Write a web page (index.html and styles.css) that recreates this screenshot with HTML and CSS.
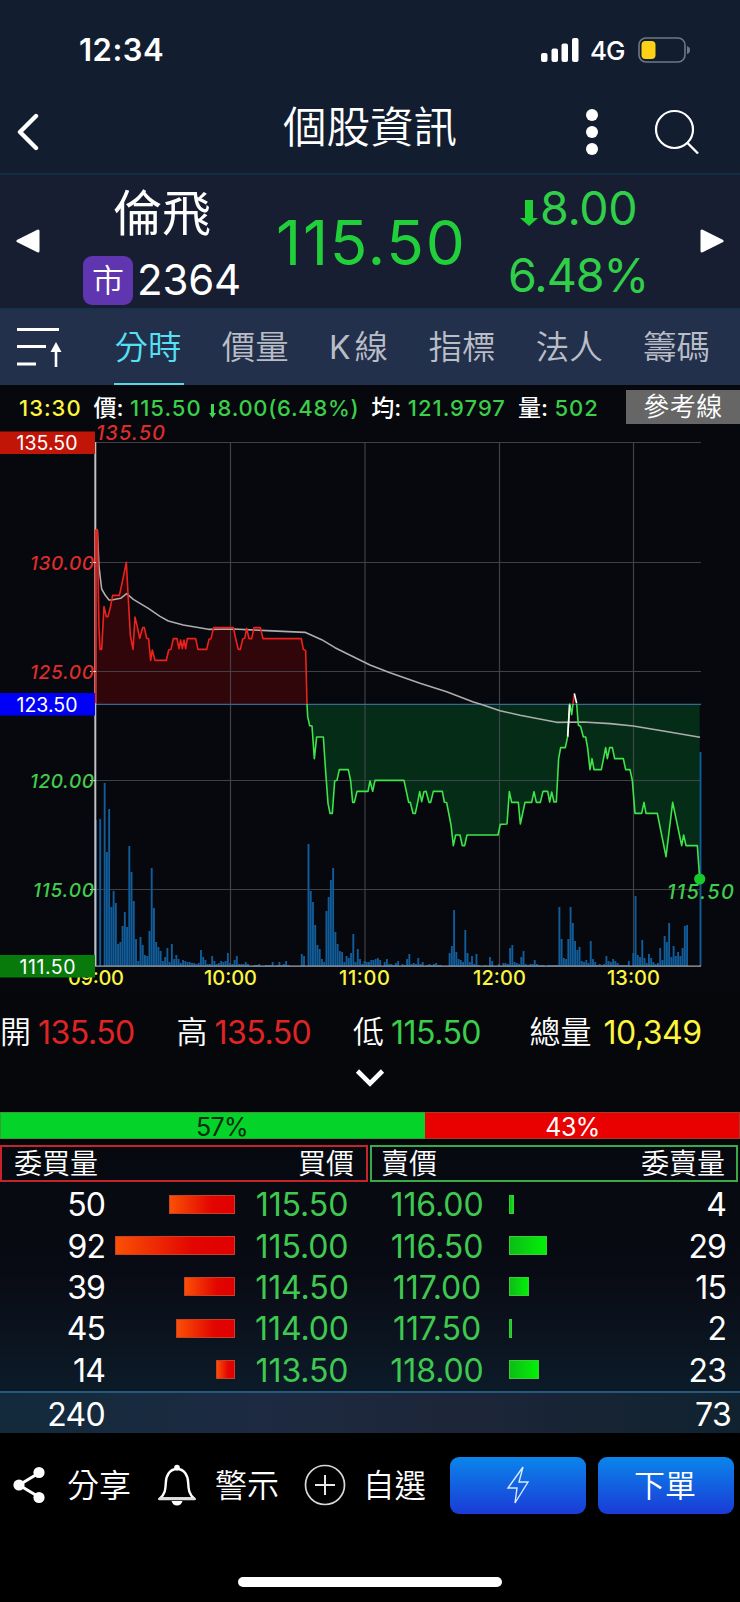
FILE: index.html
```html
<!DOCTYPE html>
<html lang="zh-Hant">
<head>
<meta charset="utf-8">
<title>個股資訊</title>
<link rel="stylesheet" href="styles.css">
</head>
<body>
<div class="app">
  <header class="top">
    <div class="status">
      <span class="clock">12:34</span>
      <svg class="signal" width="38" height="24" viewBox="0 0 38 24"><g fill="#fff"><rect x="0" y="15" width="6.5" height="9" rx="2"/><rect x="10.5" y="10.5" width="6.5" height="13.5" rx="2"/><rect x="20.5" y="5.5" width="6.5" height="18.5" rx="2"/><rect x="31" y="0" width="6.5" height="24" rx="2"/></g></svg>
      <span class="net">4G</span>
      <svg class="battery" width="53" height="26" viewBox="0 0 53 26"><rect x="1" y="1" width="46" height="24" rx="7" fill="none" stroke="#6f7887" stroke-width="1.6"/><rect x="3.5" y="4" width="14" height="18" rx="4" fill="#fcd116"/><path d="M49 9q3 1 3 4t-3 4z" fill="#6f7887"/></svg>
    </div>
    <div class="titlebar">
      <svg class="back" width="24" height="38" viewBox="0 0 24 38"><path d="M20 3L4 19L20 35" fill="none" stroke="#fff" stroke-width="4.4" stroke-linecap="round" stroke-linejoin="round"/></svg>
      <h1 class="title">個股資訊</h1>
      <svg class="dots" width="12" height="46" viewBox="0 0 12 46"><g fill="#fff"><circle cx="6" cy="6" r="6"/><circle cx="6" cy="23" r="6"/><circle cx="6" cy="40" r="6"/></g></svg>
      <svg class="search" width="46" height="46" viewBox="0 0 46 46"><circle cx="20.500" cy="20.500" r="18.500" fill="none" stroke="#fff" stroke-width="2.200"/><path d="M33.500 34L44 44.500" stroke="#fff" stroke-width="2.400"/></svg>
    </div>
  </header>

  <section class="quote">
    <svg class="prev" width="24" height="24" viewBox="0 0 24 24"><path d="M22 2V22L2 12Z" fill="#fff" stroke="#fff" stroke-width="3" stroke-linejoin="round"/></svg>
    <div class="ident">
      <div class="name">倫飛</div>
      <div class="codeline"><span class="badge">市</span><span class="code">2364</span></div>
    </div>
    <div class="price">115.50</div>
    <div class="change">
      <div class="delta"><svg width="18" height="26" viewBox="0 0 18 26"><path d="M5 0H13V18H18L9 26L0 18H5Z" fill="#1fd032"/></svg><span>8.00</span></div>
      <div class="pct">6.48%</div>
    </div>
    <svg class="next" width="24" height="24" viewBox="0 0 24 24"><path d="M2 2V22L22 12Z" fill="#fff" stroke="#fff" stroke-width="3" stroke-linejoin="round"/></svg>
  </section>

  <nav class="tabs">
    <svg class="sort" width="46" height="42" viewBox="0 0 46 42"><path d="M0 2.500H42M0 19.500H29M0 37H19" stroke="#fff" stroke-width="3"/><path d="M39 40V22" stroke="#fff" stroke-width="2.600"/><path d="M39 15L44.500 25H33.500Z" fill="#fff"/></svg>
    <span class="tab active">分時</span><span class="tab">價量</span><span class="tab kline"><i>K</i>線</span><span class="tab">指標</span><span class="tab">法人</span><span class="tab">籌碼</span>
  </nav>

  <section class="chart">
    <div class="info">
      <span class="yellow">13:30</span><b>價:</b><span class="green">115.50</span>
      <span class="green small-delta"><svg width="7" height="14" viewBox="0 0 7 14"><path d="M2 0H5V9H7L3.500 14L0 9H2Z" fill="#3fd555"/></svg>8.00(6.48%)</span>
      <b>均:</b><span class="green">121.9797</span><b>量:</b><span class="green">502</span>
      <button class="ref">參考線</button>
    </div>
    <svg class="plot" width="740" height="567" viewBox="0 425 740 567">
      <g transform="translate(0 380) scale(.333333)">
        <path class="fill-up" d="M287 972V450L292 450L297 745L300 808H305L312 680L319 710H324L331 682L338 646H358L366 610L379 547L384 640L391 765L399 808L405 711L413 745L419 775L428 743H433L440 775L446 777L452 841L457 810L465 841H499L506 810L513 808L520 776H531L537 806L542 780L547 806L552 780L557 806L562 776H587L594 808H620L627 778L633 776L641 743H700L708 780L715 808H721L728 777L734 775L740 745L747 776H755L762 743H781L789 776H904L910 808L917 812L921 972Z"/>
      </g>
      <g transform="translate(370 690) scale(.333333)">
        <path class="fill-down" d="M-189 42L-187 80L-181 107L-174 108L-167 206L-160 141H-140L-133 245L-126 340L-120 370H-113L-106 273L-99 271L-92 239H-65L-58 273L-52 337H-47L-39 304H-6L0 273L8 304L15 271H102L109 304L116 337H121L129 370H136L143 337L149 305L155 335L162 305L168 304L177 337H182L190 304H217L223 336L230 338L243 405L250 467L257 435H270L277 467H284L291 435H384L391 403L411 402L418 305L425 337H445L451 402L465 337H485L492 305L499 337H511L519 304H533L539 336L545 306L552 336H559L566 205L572 173H586L593 140L599 42L605 74L610 42H620L625 105L632 110L640 141H647L653 175L660 239L666 206L672 239H694L707 173L712 206L719 173H727L734 206H760L767 239H780L787 272L795 370H815L822 337L828 370H862L888 500L908 337L935 467L941 435L948 467H982L989 565V42Z"/>
      </g>
      <g class="grid"><path d="M95 442.500H701M95 562.500H701M95 671.500H701M95 780.500H701M95 889.500H701M230.500 442V966M365 442V966M499.500 442V966M633.500 442V966"/></g>
      <path class="volume" id="volume" d=""/>
      <path d="M95 704.300H701" class="base"/>
      <path d="M95 966.200H701" class="axis"/>
      <path d="M95.300 442V966" class="axis wide"/>
      <g transform="translate(0 380) scale(.333333)">
        <path class="avg" d="M287 450H292L297 560L305 627L316 646L327 660H335L362 655L380 641L400 658L445 685L480 709L505 723L550 735L625 748L700 747L800 752L915 757L965 779L1005 803L1110 855L1170 878L1260 910L1340 935L1420 966L1440 972L1500 992L1560 1006L1670 1027L1750 1026L1830 1031L1900 1038L1990 1053L2100 1072"/>
        <path class="line-up" d="M287 970V450L292 450L297 745L300 808H305L312 680L319 710H324L331 682L338 646H358L366 610L379 547L384 640L391 765L399 808L405 711L413 745L419 775L428 743H433L440 775L446 777L452 841L457 810L465 841H499L506 810L513 808L520 776H531L537 806L542 780L547 806L552 780L557 806L562 776H587L594 808H620L627 778L633 776L641 743H700L708 780L715 808H721L728 777L734 775L740 745L747 776H755L762 743H781L789 776H904L910 808L917 812L921 972"/>
      </g>
      <g transform="translate(370 690) scale(.333333)">
        <path class="line-down" d="M-189 42L-187 80L-181 107L-174 108L-167 206L-160 141H-140L-133 245L-126 340L-120 370H-113L-106 273L-99 271L-92 239H-65L-58 273L-52 337H-47L-39 304H-6L0 273L8 304L15 271H102L109 304L116 337H121L129 370H136L143 337L149 305L155 335L162 305L168 304L177 337H182L190 304H217L223 336L230 338L243 405L250 467L257 435H270L277 467H284L291 435H384L391 403L411 402L418 305L425 337H445L451 402L465 337H485L492 305L499 337H511L519 304H533L539 336L545 306L552 336H559L566 205L572 173H586L593 140L599 42L605 74L609 42M620 42L625 105L632 110L640 141H647L653 175L660 239L666 206L672 239H694L707 173L712 206L719 173H727L734 206H760L767 239H780L787 272L795 370H815L822 337L828 370H862L888 500L908 337L935 467L941 435L948 467H982L989 565"/>
        <path class="line-up" d="M609 42L613 14"/>
        <path class="spike" d="M593 140L599 44M613 10L620 40"/>
      </g>
      <circle cx="699.700" cy="879" r="5.600" fill="#18c92c"/>
      <g class="ticks"><path d="M90 562.500H96M90 671.500H96M90 780.500H96M90 889.500H96"/></g>
      <g class="lbl it">
        <text class="r" x="96" y="440" textLength="69">135.50</text>
        <text class="r" x="30" y="569.800" textLength="64">130.00</text>
        <text class="r" x="30" y="678.800" textLength="64">125.00</text>
        <text class="g" x="30" y="787.800" textLength="64">120.00</text>
        <text class="g" x="33" y="896.800" textLength="61">115.00</text>
        <text class="g" x="667" y="899" textLength="67">115.50</text>
      </g>
      <g class="lbl time">
        <text x="68" y="985" textLength="56">09:00</text>
        <text x="204" y="985" textLength="53">10:00</text>
        <text x="339" y="985" textLength="51">11:00</text>
        <text x="473" y="985" textLength="53">12:00</text>
        <text x="607" y="985" textLength="53">13:00</text>
      </g>
      <rect x="0" y="431.500" width="95" height="22.500" fill="#c11508"/>
      <rect x="0" y="693" width="95" height="22.500" fill="#0000f6"/>
      <rect x="0" y="955" width="95" height="22.500" fill="#087a0b"/>
      <g class="lbl box">
        <text x="16.500" y="450" textLength="61">135.50</text>
        <text x="16.500" y="711.500" textLength="61">123.50</text>
        <text x="19.500" y="973.500" textLength="56">111.50</text>
      </g>
    </svg>
  </section>

  <section class="stats">
    <div class="stat"><span>開</span><em class="red">135.50</em></div>
    <div class="stat"><span>高</span><em class="red">135.50</em></div>
    <div class="stat"><span>低</span><em class="green">115.50</em></div>
    <div class="stat total"><span>總量</span><em class="yellow">10,349</em></div>
  </section>
  <div class="expand"><svg width="30" height="20" viewBox="0 0 30 20"><path d="M2.500 3L15 15.500L27.500 3" fill="none" stroke="#fff" stroke-width="4.600"/></svg></div>

  <div class="ratio"><div class="buy">57%</div><div class="sell">43%</div></div>

  <section class="book">
    <div class="heads">
      <div class="head bid"><span>委買量</span><span>買價</span></div>
      <div class="head ask"><span>賣價</span><span>委賣量</span></div>
    </div>
    <div class="row"><span class="q">50</span><span class="bar b"><i style="width:66px"></i></span><span class="p">115.50</span><span class="p a">116.00</span><span class="bar s"><i style="width:5px"></i></span><span class="q2">4</span></div>
    <div class="row"><span class="q">92</span><span class="bar b"><i style="width:120px"></i></span><span class="p">115.00</span><span class="p a">116.50</span><span class="bar s"><i style="width:38px"></i></span><span class="q2">29</span></div>
    <div class="row"><span class="q">39</span><span class="bar b"><i style="width:51px"></i></span><span class="p">114.50</span><span class="p a">117.00</span><span class="bar s"><i style="width:20px"></i></span><span class="q2">15</span></div>
    <div class="row"><span class="q">45</span><span class="bar b"><i style="width:59px"></i></span><span class="p">114.00</span><span class="p a">117.50</span><span class="bar s"><i style="width:3px"></i></span><span class="q2">2</span></div>
    <div class="row"><span class="q">14</span><span class="bar b"><i style="width:19px"></i></span><span class="p">113.50</span><span class="p a">118.00</span><span class="bar s"><i style="width:30px"></i></span><span class="q2">23</span></div>
    <div class="sum"><span class="q">240</span><span class="q2">73</span></div>
  </section>

  <footer class="actions">
    <div class="toolbar">
      <svg class="share" width="34" height="38" viewBox="0 0 34 38"><path d="M27 7L7 19L27 31" fill="none" stroke="#fff" stroke-width="3"/><g fill="#fff"><circle cx="27" cy="6.500" r="5.600"/><circle cx="7" cy="19" r="5.600"/><circle cx="27" cy="31.500" r="5.600"/></g></svg>
      <span class="act">分享</span>
      <svg class="bell" width="38" height="42" viewBox="0 0 38 42"><path d="M2 34.500C7 30 7.500 26 7.800 19C8 11 12 5 19 5S30 11 30.200 19C30.500 26 31 30 36 34.500Z" fill="none" stroke="#fff" stroke-width="2.400"/><path d="M1 34.800H37" stroke="#ddd" stroke-width="3"/><circle cx="19" cy="3.600" r="2.800" fill="#fff"/><path d="M13.500 37H24.500Q23 41.500 19 41.500T13.500 37Z" fill="#fff"/></svg>
      <span class="act">警示</span>
      <svg class="plus" width="42" height="42" viewBox="0 0 42 42"><circle cx="21" cy="21" r="19.500" fill="none" stroke="#d8d8d8" stroke-width="1.700"/><path d="M11 21H31M21 11V31" stroke="#e8e8e8" stroke-width="2"/></svg>
      <span class="act last">自選</span>
      <button class="btn flash"><svg width="24" height="40" viewBox="0 0 24 40"><path d="M17 2L2 23H11L9 38L22 17H13Z" fill="none" stroke="#d5eaff" stroke-width="1.400"/></svg></button>
      <button class="btn order"><span>下單</span></button>
    </div>
    <div class="home"></div>
  </footer>
</div>
<script src="app.js"></script>
</body>
</html>
```
FILE: styles.css
```css
* { box-sizing: border-box; }
body {
  margin: 0;
  background: #000;
  color: #fff;
  font-family: Inter, "Noto Sans CJK TC", sans-serif;
  font-weight: 350;
}
svg { display: block; flex: none; }
button { border: 0; padding: 0; font: inherit; color: #fff; }
i, em { font-style: normal; }
.app { width: 740px; height: 1602px; overflow: hidden; background: #05070b; }

.top { height: 175px; background: #131d30; border-bottom: 2px solid #132e44; }
.status { height: 98px; padding: 0 49px 0 79px; display: flex; align-items: center; }
.clock { font-size: 31px; font-weight: 600; letter-spacing: 0.5px; flex: 1; padding-top: 1px; }
.net { font-size: 26px; font-weight: 450; margin: 2px 13px 0 11px; width: 35px; letter-spacing: -1px; }
.battery { margin-top: 1px; }
.signal { margin-top: 1px; }
.titlebar { height: 70px; padding: 0 37px 3px 16px; display: flex; align-items: center; }
.title { margin: 0 0 10px 243px; width: 180px; font-size: 43.5px; font-weight: 350; line-height: 60px; }
.dots { margin-left: 123px; }
.search { margin: 1px 0 0 56px; }

.quote { height: 133px; background: #171e31; display: flex; align-items: center; padding: 0 16px; }
.prev, .next { margin-bottom: 2px; }
.ident { width: 160px; margin-left: 43px; height: 133px; }
.name { margin: 9px 0 0 30px; font-size: 49px; font-weight: 400; line-height: 60px; }
.codeline { display: flex; align-items: center; gap: 4px; margin-top: 10px; }
.badge { width: 50px; height: 49px; border-radius: 9px; background: #5f35b0; font-size: 32px; line-height: 50px; text-align: center; }
.code { font-size: 42px; font-weight: 400; letter-spacing: -.2px; line-height: 52px; }
.price { width: 190px; margin-left: 33px; font-size: 62px; font-weight: 400; color: #21cf3a; letter-spacing: 1.700px; padding-top: 1px; }
.change { width: 150px; margin-left: 43px; color: #31cf49; font-size: 46.500px; font-weight: 400; letter-spacing: -.3px; }
.delta { display: flex; align-items: center; gap: 2px; padding-left: 11px; height: 66px; }
.delta svg { margin-top: 10px; }
.pct { height: 67px; line-height: 69px; letter-spacing: -1px; margin-left: -1px; }
.next { margin-left: 41px; }

.tabs { height: 77px; background: #22304c; border-top: 2px solid #17324c; display: flex; align-items: flex-start; padding-left: 17px; color: #b9bdc6; font-size: 33.500px; }
.sort { margin: 17px 51px 0 0; }
.tab { flex: none; width: 70px; height: 75px; line-height: 74px; text-align: center; margin-right: 37.300px; padding-right: 2px; white-space: nowrap; }
.tab.kline { width: 62px; }
.kline i { margin-right: 4px; font-size: 32px; font-weight: 400; }
.tab.active { color: #55e0f5; border-bottom: 2px solid #55d8e8; }

.chart { height: 607px; padding-top: 4px; background: #06080d; }
.info { height: 36px; display: flex; align-items: center; padding: 3px 0 0 19px; font-size: 22px; line-height: 35px; letter-spacing: 1px; font-weight: 500; white-space: nowrap; }
.info b { font-size: 23px; font-weight: 500; margin: 0 6.500px 0 12px; letter-spacing: 0; }
.small-delta { display: flex; align-items: center; gap: 2px; margin-left: 7px; letter-spacing: .7px; }
.small-delta svg { margin-top: 4px; }
.ref { width: 114px; height: 34px; margin: 0 0 4px auto; background: #666; font-size: 26px; font-weight: 350; line-height: 34px; letter-spacing: .5px; padding-bottom: 1px; }
.yellow { color: #fdf53e; }
.green { color: #3bce4b; }
.red { color: #e02424; }

.plot { overflow: visible; }
.grid path { stroke: #494b51; stroke-opacity: .85; stroke-width: 1.200; fill: none; }
.fill-up { fill: #31060b; }
.fill-down { fill: #052c17; }
.line-up, .line-down, .avg, .spike { fill: none; stroke-width: 4.800; stroke-linejoin: round; }
.line-up { stroke: #ee211c; }
.line-down { stroke: #3fe34a; }
.avg { stroke: #adadad; }
.spike { stroke: #fff; stroke-width: 5; }
.base { stroke: #3b6891; stroke-width: 1.200; }
.axis { stroke: #a2a8b0; stroke-width: 1.200; }
.axis.wide { stroke: #c0c0c4; stroke-width: 2; }
.volume { stroke: #115c99; stroke-width: 1.900; fill: none; }
.ticks path { stroke: #d8d8d8; stroke-width: 1.200; }
.lbl { font-size: 20px; font-weight: 500; }
.it { font-style: italic; font-size: 19px; }
.it text:first-child, .it text:last-child { font-size: 20px; }
.lbl .r { fill: #dd2d2b; }
.lbl .g { fill: #42cc4d; }
.time { fill: #fbf53f; }
.box { fill: #fff; font-weight: 400; font-size: 19.500px; }

.stats { height: 64px; margin-top: 8px; display: flex; font-size: 32px; line-height: 65px; }
.stat { width: 176.500px; display: flex; white-space: nowrap; }
.stat span { font-size: 31px; margin: -1px 7px 0 0; }
.stat em { letter-spacing: -.5px; font-weight: 400; }
.stat.total { width: 210px; }
.stat.total span { margin-right: 12px; }
.expand { height: 48px; display: flex; justify-content: center; padding-top: 4px; }

.ratio { height: 27px; display: flex; font-size: 25px; font-weight: 400; text-align: center; letter-spacing: -.6px; }
.buy { width: 425px; padding-left: 18px; background: #04d42a; color: #092b0a; border: 1px solid #3a9b35; border-right: 0; line-height: 29px; }
.sell { flex: 1; background: #e90000; border: 1px solid #a33a2a; border-left: 0; line-height: 29px; padding-right: 19px; }

.book { margin-top: 6px; background: linear-gradient(#070910 0%, #090b14 45%, #0b1723 75%, #0e1e2e 100%); }
.heads { display: flex; gap: 2px; }
.head { width: 368px; height: 37px; display: flex; justify-content: space-between; font-size: 28px; line-height: 34px; padding: 0 12px; }
.bid { border: 2px solid #c4242a; }
.ask { border: 2px solid #3aa94a; padding: 0 11px 0 9px; }
.row { height: 41.400px; display: flex; align-items: center; font-size: 32px; font-weight: 400; letter-spacing: -.9px; }
.heads + .row { margin-top: 2px; }
.q { width: 105px; text-align: right; }
.bar { height: 19px; display: flex; margin-top: -1px; }
.bar.b { width: 130px; justify-content: flex-end; }
.bar i { display: block; height: 19px; }
.bar.b i { background: linear-gradient(90deg, #fa5005, #e20500 65%, #e00000); border: 1px solid #c6402a; }
.bar.s i { background: linear-gradient(90deg, #0dbd16, #02f007); border: 1px solid #40c940; }
.p { width: 100px; margin-left: 17px; color: #3fc951; letter-spacing: -.1px; text-align: center; white-space: nowrap; }
.p.a { margin-left: 35px; }
.bar.s { width: 120px; margin-left: 22px; }
.q2 { flex: 1; text-align: right; padding-right: 14px; }
.sum { height: 42px; border-top: 2px solid #23597c; background: linear-gradient(90deg, #122a3c, #1d2a41 35%, #1d2639 60%, #10222f); display: flex; align-items: center; font-size: 32px; font-weight: 400; letter-spacing: -.7px; padding-top: 4px; }
.sum .q2 { padding-right: 9px; }

.actions { background: #000; height: 171px; padding-top: 24px; }
.toolbar { height: 57px; display: flex; align-items: center; padding-left: 12px; }
.act { font-size: 32px; line-height: 54px; margin-top: 1px; width: 64px; white-space: nowrap; }
.share { margin-right: 21px; }
.bell { margin: 0 19px 0 27px; }
.plus { margin: 0 17px 0 25px; }
.last { font-size: 31.500px; }
.btn { width: 136px; height: 57px; border-radius: 9px; background: linear-gradient(#0b85eb, #1a3bd6); display: flex; align-items: center; justify-content: center; font-size: 31px; }
.btn span { margin: 0 2px 3px 0; }
.flash { margin-left: 23px; }
.order { margin-left: 12px; }
.home { width: 264px; height: 10px; border-radius: 5px; background: #fff; margin: 63px auto 0; }
```
FILE: app.js
```
// One volume value per minute, 09:00 to 13:30, in pixels of bar height.
const volumes = [
  146,0,147,0,183,114,157,59,75,63,22,24,40,54,39,120,94,65,27,5,29,21,11,10,35,98,58,24,19,15,
  5,9,18,4,22,7,11,7,3,6,5,4,4,3,3,2,3,16,9,6,2,2,10,5,2,3,5,4,5,13,
  3,2,6,10,2,2,2,4,2,0,0,1,1,2,0,0,1,1,1,4,0,1,4,1,2,5,1,0,0,0,
  0,0,12,10,0,122,75,64,41,21,17,7,4,55,69,86,98,34,22,15,14,4,10,8,13,32,4,17,7,2,
  5,4,4,6,6,7,8,6,0,4,7,2,2,1,3,5,0,2,1,7,12,2,3,2,8,2,4,0,1,2,
  1,2,3,1,1,0,0,0,13,20,56,14,7,6,4,36,13,4,10,2,12,1,0,0,1,0,9,5,0,0,
  2,0,3,3,2,18,21,4,3,2,9,15,2,1,2,2,6,2,1,1,1,0,1,1,1,1,1,59,27,8,
  7,27,59,43,25,16,19,5,4,6,3,25,7,4,1,2,1,2,10,5,4,7,5,3,1,1,1,1,5,0,
  13,70,11,9,26,8,3,12,8,4,2,3,18,6,30,24,43,9,20,10,14,10,18,40,41,0,0,0,0,0,
  214
];
document.getElementById("volume").setAttribute("d",
  volumes.map((h, i) => h ? `M${(95.7 + i * 2.24).toFixed(2)} 966V${966 - h}` : "").join(""));
```
